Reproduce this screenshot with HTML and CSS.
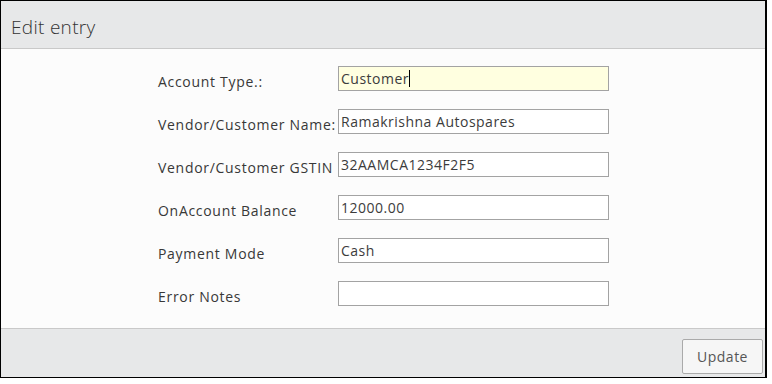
FILE: index.html
```html
<!DOCTYPE html>
<html>
<head>
  <title>Edit entry</title>
  <meta name="viewport" content="width=device-width, initial-scale=1.0">
  <link rel="stylesheet" href="styles.css">
</head>
<body>
  <div class="dialog">
    <div class="dialog-header">Edit entry</div>

    <div class="dialog-body">
      <form class="entry-form">
        <div class="form-row">
          <label>Account Type.:</label>
          <span class="field">
            <input class="active" type="text" value="Customer">
            <span class="caret"></span>
          </span>
        </div>
        <div class="form-row">
          <label>Vendor/Customer Name:</label>
          <span class="field"><input type="text" value="Ramakrishna Autospares"></span>
        </div>
        <div class="form-row">
          <label>Vendor/Customer GSTIN</label>
          <span class="field"><input type="text" value="32AAMCA1234F2F5"></span>
        </div>
        <div class="form-row">
          <label>OnAccount Balance</label>
          <span class="field"><input type="text" value="12000.00"></span>
        </div>
        <div class="form-row">
          <label>Payment Mode</label>
          <span class="field"><input type="text" value="Cash"></span>
        </div>
        <div class="form-row">
          <label>Error Notes</label>
          <span class="field"><input type="text" value=""></span>
        </div>
      </form>
    </div>

    <div class="dialog-footer">
      <button type="button" class="btn">Update</button>
    </div>
  </div>
</body>
</html>
```

FILE: styles.css
```css
body {
  margin: 0;
  padding: 0;
  background-color: #fff;
  font-family: "Open Sans", Arial, sans-serif;
}

.dialog {
  width: 767px;
  height: 378px;
  box-sizing: border-box;
  border: 1px solid #000;
  border-right-width: 2px;
  display: flex;
  flex-direction: column;
  background-color: #fcfcfc;
}

.dialog-header {
  height: 44px;
  padding-top: 3px;
  border-bottom: 1px solid #c9c9c9;
  background-color: #e7e8e9;
  padding-left: 10px;
  font-size: 19px;
  font-weight: 300;
  letter-spacing: 0.3px;
  line-height: 47px;
  color: #333;
}

.dialog-body {
  flex: 1;
  min-height: 0;
}

.entry-form {
  width: 452px;
  margin: 17px auto 0;
}

.form-row {
  display: grid;
  grid-template-columns: 181px 271px;
  height: 25px;
  margin-bottom: 18px;
}

.form-row label {
  padding: 7px 0 0 1px;
  font-size: 14px;
  letter-spacing: 0.7px;
  line-height: 18px;
  color: #383838;
  white-space: nowrap;
}

.field {
  position: relative;
  display: block;
}

.field input {
  display: block;
  width: 100%;
  height: 25px;
  box-sizing: border-box;
  margin: 0;
  padding: 0 2px;
  border: 1px solid #a3a3a3;
  border-radius: 0;
  background-color: #fff;
  font-family: "Open Sans", Arial, sans-serif;
  font-size: 14px;
  letter-spacing: 0.5px;
  color: #3c3c3c;
  outline: none;
}

.field input.active {
  background-color: #ffffe0;
}

/* text cursor in the focused field */
.caret {
  position: absolute;
  left: 71px;
  top: 4px;
  width: 1px;
  height: 17px;
  background-color: #000;
}

.dialog-footer {
  height: 49px;
  border-top: 1px solid #c9c9c9;
  background-color: #e7e8e9;
  display: flex;
  justify-content: flex-end;
  align-items: flex-start;
  padding: 10px 2px 0 0;
  box-sizing: border-box;
}

.btn {
  width: 81px;
  height: 35px;
  border: 1px solid #aaa;
  border-radius: 2px;
  background-color: #f6f6f6;
  font-family: "Open Sans", Arial, sans-serif;
  font-size: 14px;
  letter-spacing: 0.5px;
  color: #555;
  padding: 0;
}
```
